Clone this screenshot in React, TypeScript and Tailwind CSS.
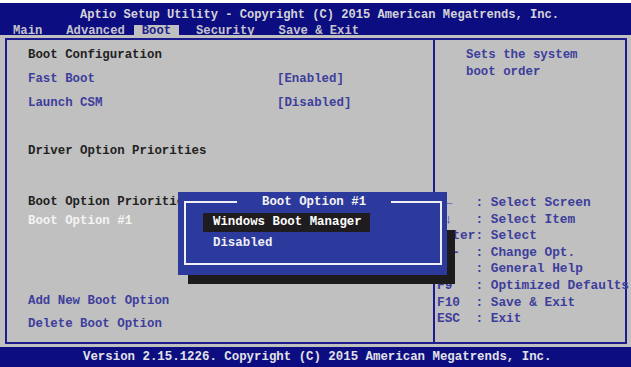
import React from "react";

const mono = "font-['Liberation_Mono','Courier_New',monospace] font-bold";

const helpLines: [string, string][] = [
  ["→←", "Select Screen"],
  ["↑↓", "Select Item"],
  ["Enter", "Select"],
  ["+/-", "Change Opt."],
  ["F1", "General Help"],
  ["F9", "Optimized Defaults"],
  ["F10", "Save & Exit"],
  ["ESC", "Exit"],
];

const Row = ({ h, className, children }: { h: string; className?: string; children?: React.ReactNode }) => (
  <div className={`flex items-center ${h} ${className ?? ""}`}>{children}</div>
);

export default function App() {
  return (
    <div className={`relative w-[631px] h-[367px] overflow-hidden bg-[#c0c0c0] flex flex-col ${mono}`}>
      <div className="h-[3px] bg-white" />

      {/* title + tabs */}
      <div className="h-[32px] bg-[#0d0d82] flex flex-col">
        <div className="h-[20px] pt-[5px] pl-[80px] flex items-center text-[12.1px] text-[#d4d4d8] whitespace-pre">
          Aptio Setup Utility - Copyright (C) 2015 American Megatrends, Inc.
        </div>
        <div className="h-[12px] flex items-end pl-[13px] text-[12.2px] text-[#c4c4cc] whitespace-pre">
          <span className="h-[10px] leading-[12px]">Main</span>
          <span className="h-[10px] leading-[12px] ml-[24px]">Advanced</span>
          <span className="h-[10px] leading-[12px] ml-[9px] px-[8px] bg-[#c0c0c0] text-[#1d1d8c]">Boot</span>
          <span className="h-[10px] leading-[12px] ml-[17px]">Security</span>
          <span className="h-[10px] leading-[12px] ml-[24px]">Save &amp; Exit</span>
        </div>
      </div>

      {/* main panel */}
      <div className="flex-1 pt-[3px] pb-[3px] pl-[5px] pr-[4px]">
        <div className="h-full border-2 border-[#1c1c8e] flex text-[12.4px]">
          <div className="w-[426px] shrink-0 pl-[21px] pt-[3px] flex flex-col whitespace-pre">
            <Row h="h-[24px]" className="text-[#222]">Boot Configuration</Row>
            <Row h="h-[24px]" className="text-[#3d3d9c]">
              <span className="w-[249px]">Fast Boot</span>
              <span>[Enabled]</span>
            </Row>
            <Row h="h-[24px]" className="text-[#3d3d9c]">
              <span className="w-[249px]">Launch CSM</span>
              <span>[Disabled]</span>
            </Row>
            <Row h="h-[24px]" />
            <Row h="h-[24px]" className="text-[#222]">Driver Option Priorities</Row>
            <Row h="h-[29px]" />
            <Row h="h-[20px]" className="text-[#222]">Boot Option Priorities</Row>
            <Row h="h-[19px]" className="text-[#f4f4f4]">Boot Option #1</Row>
            <Row h="h-[58px]" />
            <Row h="h-[24px]" className="text-[#3d3d9c]">Add New Boot Option</Row>
            <Row h="h-[23px]" className="text-[#3d3d9c]">Delete Boot Option</Row>
          </div>

          <div className="flex-1 min-w-0 border-l-2 border-[#1c1c8e] flex flex-col text-[#3d3d9c] whitespace-pre">
            <div className="pl-[31px] pt-[7px] leading-[17px] text-[12.4px]">
              <div>Sets the system</div>
              <div>boot order</div>
            </div>
            <div className="mt-[114px] pl-[2px] text-[12.8px] leading-[16.6px]">
              {helpLines.map(([k, d]) => (
                <div key={k}>{`${k.padEnd(5)}: ${d}`}</div>
              ))}
            </div>
          </div>
        </div>
      </div>

      {/* footer */}
      <div className="h-[20px] bg-[#0d0d82] flex items-center pl-[83px] text-[12.4px] text-[#e2e2e6] whitespace-pre">
        Version 2.15.1226. Copyright (C) 2015 American Megatrends, Inc.
      </div>

      {/* popup shadow */}
      <div className="absolute left-[188px] top-[230px] w-[267px] h-[54px] bg-[#1d1b1c]" />

      {/* popup */}
      <div className="absolute left-[178px] top-[192px] w-[269px] h-[83px] bg-[#2d3a9d] pt-[9px] pl-[6px] pr-[5px] pb-[10px] text-[12.4px] whitespace-pre">
        <div className="relative h-full border-2 border-[#eef0f6]">
          <div className="absolute left-[51px] -top-[9px] h-[16px] px-[25px] bg-[#2d3a9d] text-[#f4f4f4] leading-[16px]">
            Boot Option #1
          </div>
          <div className="mt-[10px] ml-[17px] w-[167px] h-[19px] pl-[10px] flex items-center bg-[#1e1c1f] text-white">
            Windows Boot Manager
          </div>
          <div className="ml-[27px] h-[22px] flex items-center text-[#f0f0f4]">Disabled</div>
        </div>
      </div>
    </div>
  );
}
